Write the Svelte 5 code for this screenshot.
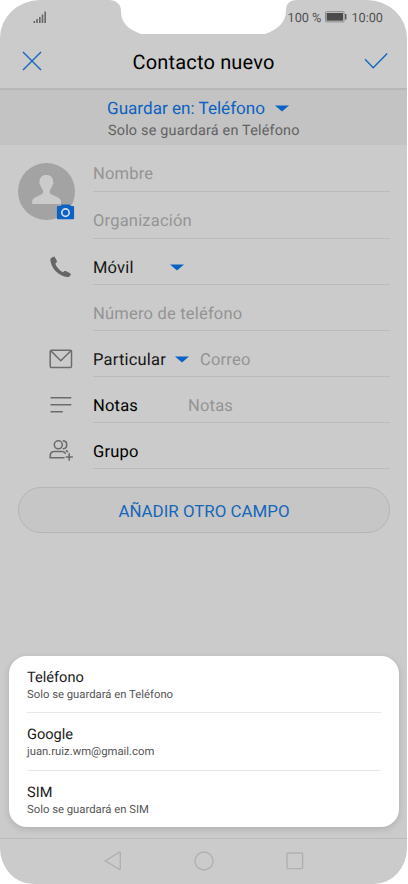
<script>
  let account = 'Teléfono';

  const accounts = [
    { name: 'Teléfono', detail: 'Solo se guardará en Teléfono' },
    { name: 'Google', detail: 'juan.ruiz.wm@gmail.com' },
    { name: 'SIM', detail: 'Solo se guardará en SIM' },
  ];

  const fields = [
    { icon: 'phone', label: 'Móvil', menu: true, size: 'mobile' },
    { hint: 'Número de teléfono' },
    { icon: 'mail', label: 'Particular', menu: true, hint: 'Correo', size: 'mail' },
    { icon: 'notes', label: 'Notas', hint: 'Notas', size: 'notes' },
    { icon: 'group', label: 'Grupo', size: 'group' },
  ];
</script>

<div class="phone">
  <svg class="notch" width="188" height="35" viewBox="0 0 188 35">
    <path d="M0 0C7 0 12 4 12 11C12 22 18 29 32 34H156C170 29 177 21 177 11C177 4 180 0 188 0Z" fill="#fff" />
  </svg>

  <div class="status">
    <svg class="signal" width="14" height="13" viewBox="0 0 14 13" fill="#666">
      <rect x="0.5" y="10" width="1.6" height="2" />
      <rect x="3.2" y="8" width="1.6" height="4" />
      <rect x="6" y="6" width="1.6" height="6" />
      <rect x="8.7" y="3.5" width="1.6" height="8.5" />
      <rect x="11.4" y="0.5" width="1.6" height="11.5" />
    </svg>
    <div class="status-right">
      <span class="percent">100 %</span>
      <svg width="22" height="12" viewBox="0 0 22 12">
        <rect x="0.5" y="0.7" width="18.6" height="10.2" rx="1" fill="none" stroke="#8a8a8a" />
        <rect x="1.6" y="2" width="16.4" height="7.7" fill="#4b4b4b" />
        <rect x="20" y="3" width="1.4" height="5.5" fill="#555" />
      </svg>
      <span class="clock">10:00</span>
    </div>
  </div>

  <header>
    <svg width="20" height="20" viewBox="0 0 20 20" fill="none" stroke="#1467bd" stroke-width="1.4">
      <path d="M1 1L19 19M19 1L1 19" />
    </svg>
    <h1>Contacto nuevo</h1>
    <svg width="24" height="18" viewBox="0 0 24 18" fill="none" stroke="#1467bd" stroke-width="1.4">
      <path d="M1 7.3L9.2 15.7L23.2 1.4" />
    </svg>
  </header>

  <div class="save-in">
    <div class="save-title">
      <span>Guardar en: {account}</span>
      <svg width="14" height="7" viewBox="0 0 14 7"><path d="M0 0.5H14L7 6.6Z" fill="#0a62c4" /></svg>
    </div>
    <div class="save-detail">Solo se guardará en {account}</div>
  </div>

  <div class="form">
    <div class="identity">
      <svg class="avatar" width="58" height="58" viewBox="0 0 58 58">
        <circle cx="28.5" cy="28.5" r="28.5" fill="#a3a3a3" />
        <path d="M28.3 12C24 12 21.5 14.5 21.7 18.5C21 18.6 21 21 22.2 21.8C22.8 24.5 24 26 25 27V29.8C24 33 14.2 33.5 14.2 38.5V41H43V38.5C43 33.5 32.8 33 31.8 29.8V27C33 26 34 24.5 34.5 21.8C35.7 21 35.7 18.6 35 18.5C35.2 14.5 32.7 12 28.3 12Z" fill="#cbcbcb" />
        <path d="M40 43H42.6L43.8 41.6H51.6L52.8 43H55Q56.1 43 56.1 44V55.2Q56.1 56.3 55 56.3H40Q38.9 56.3 38.9 55.2V44Q38.9 43 40 43Z" fill="#0b62c3" />
        <circle cx="47.5" cy="49.6" r="3.7" fill="none" stroke="#cfdced" stroke-width="1.7" />
      </svg>
      <div class="names">
        <div class="row tall"><span class="hint">Nombre</span></div>
        <div class="row tall"><span class="hint">Organización</span></div>
      </div>
    </div>

    {#each fields as field}
      <div class="field">
        <div class="icon">
          {#if field.icon === 'phone'}
            <svg width="24" height="24" viewBox="0 0 24 24">
              <path d="M2.2 2.9L4.5 1.7Q5.4 1.4 5.9 2.2L7.9 5.9Q8.2 6.7 7.6 7.3L6.3 8.7C7.4 12 10.6 15.4 14 17.2L15.5 16.1Q16.2 15.7 16.9 16.1L21.4 18.4Q22.2 18.9 21.7 19.8L20.5 21.4Q19.8 22.2 18.6 22.1C9.8 21.4 2.1 13.7 1.3 4.8Q1.2 3.5 2.2 2.9Z" fill="#666" />
            </svg>
          {:else if field.icon === 'mail'}
            <svg width="24" height="20" viewBox="0 0 24 20" fill="none" stroke="#6c6c6c" stroke-width="1.5" stroke-linejoin="round">
              <rect x="1.2" y="1.2" width="21.3" height="17.3" rx="1.2" />
              <path d="M2 2L11.8 11.8L21.7 2" />
            </svg>
          {:else if field.icon === 'notes'}
            <svg width="24" height="18" viewBox="0 0 24 18" stroke="#6c6c6c" stroke-width="1.4" stroke-linecap="round">
              <path d="M2 1.8H21.8M2 8.8H21.8M2 15.8H13.3" />
            </svg>
          {:else if field.icon === 'group'}
            <svg width="26" height="24" viewBox="0 0 26 24" fill="none" stroke="#6c6c6c" stroke-width="1.6" stroke-linecap="round">
              <circle cx="10.3" cy="5.8" r="4" />
              <path d="M15.4 1.9C19.8 2.2 19.8 9.4 15.4 9.8M16 18.8H2.2V17Q2.2 12.5 6.5 12.5H14Q16 12.5 17.3 14.2M18.4 11.9Q19.2 12.1 19.6 12.7M21.2 14.9V21.1M18.2 18H24.3" />
            </svg>
          {/if}
        </div>
        <div class="row">
          {#if field.label}
            <span class="label {field.size}">{field.label}</span>
          {/if}
          {#if field.menu}
            <svg class="arrow" width="14" height="7" viewBox="0 0 14 7"><path d="M0 0.5H14L7 6.6Z" fill="#0a62c4" /></svg>
          {/if}
          {#if field.hint}
            <span class="hint">{field.hint}</span>
          {/if}
        </div>
      </div>
    {/each}
  </div>

  <button class="add">AÑADIR OTRO CAMPO</button>

  <nav>
    <svg width="18" height="20" viewBox="0 0 18 20"><path d="M1.2 9.8L15.5 1.2Q16.3 1 16.3 1.8V18Q16.3 18.8 15.5 18.4Z" /></svg>
    <svg width="20" height="20" viewBox="0 0 20 20"><circle cx="10" cy="10" r="9" /></svg>
    <svg width="18" height="18" viewBox="0 0 18 18"><rect x="1" y="1" width="15.6" height="15.6" rx="0.8" /></svg>
  </nav>

  <div class="sheet">
    {#each accounts as item}
      <div class="option">
        <div class="option-name">{item.name}</div>
        <div class="option-detail">{item.detail}</div>
      </div>
    {/each}
  </div>
</div>

<style>
  :global(body) {
    background: #fff;
  }

  .phone {
    position: relative;
    display: flex;
    flex-direction: column;
    box-sizing: border-box;
    width: 407px;
    height: 884px;
    overflow: hidden;
    background: #cbcbcb;
    border-radius: 40px 40px 33px 33px / 38px 38px 36px 36px;
    font-family: Roboto, sans-serif;
    text-rendering: geometricPrecision;
    color: #000;
  }

  svg {
    display: block;
    flex: none;
  }

  .notch {
    position: absolute;
    top: 0;
    left: 109px;
  }

  .status {
    display: flex;
    justify-content: space-between;
    align-items: center;
    height: 34px;
    padding: 0 24px 0 33px;
    box-sizing: border-box;
    color: #505050;
    font-size: 12.7px;
  }

  .status span {
    padding-top: 2px;
  }

  .status-right {
    display: flex;
    align-items: center;
    gap: 4px;
  }

  header {
    display: flex;
    justify-content: space-between;
    align-items: center;
    height: 56px;
    padding: 0 19px 0 22px;
    box-sizing: border-box;
    border-bottom: 2px solid #b8b8b8;
  }

  h1 {
    margin: 0;
    padding: 1px 0 0 1px;
    font-size: 20px;
    font-weight: 400;
    line-height: 24px;
    letter-spacing: 0.18px;
  }

  .save-in {
    height: 55px;
    padding: 8px 0 0 107px;
    box-sizing: border-box;
    background: #c3c3c3;
  }

  .save-title {
    display: flex;
    align-items: center;
    gap: 10px;
    height: 21px;
    color: #0b62c0;
    font-size: 17.1px;
    line-height: 21px;
  }

  .save-title span {
    padding-top: 2px;
  }

  .save-title svg {
    margin-bottom: 1px;
  }

  .save-detail {
    margin-left: 1px;
    padding-top: 1px;
    color: #626262;
    font-size: 14.4px;
    line-height: 22px;
    letter-spacing: 0.2px;
  }

  .identity {
    display: flex;
    padding-left: 18px;
  }

  .avatar {
    margin: 18px 17px 0 0;
  }

  .names {
    flex: 1;
  }

  .field {
    display: flex;
  }

  .icon {
    display: flex;
    align-items: center;
    justify-content: center;
    width: 64px;
    height: 46px;
    margin-left: 29px;
    padding-top: 9px;
    box-sizing: border-box;
  }

  .row {
    display: flex;
    flex: 1;
    align-items: center;
    height: 46px;
    margin-right: 17px;
    padding-top: 11px;
    box-sizing: border-box;
    border-bottom: 1px solid #bbb;
    font-size: 16.5px;
    letter-spacing: 0.2px;
  }

  .row span {
    padding-top: 2px;
  }

  .row.tall {
    height: 47px;
  }

  .hint {
    color: #949494;
  }

  .mobile {
    width: 77px;
  }

  .label.mobile,
  .label.mail {
    color: #161616;
  }

  .mail {
    width: 82px;
  }

  .notes {
    width: 95px;
  }

  .arrow {
    margin-right: 11px;
  }

  .add {
    height: 46px;
    margin: 18px 17px 0 18px;
    padding: 1px 0 0;
    border: 1px solid #b5b5b5;
    border-radius: 23px;
    background: #c6c6c6;
    color: #1567ba;
    font-family: inherit;
    font-size: 16.9px;
  }

  nav {
    display: flex;
    align-items: center;
    gap: 72px;
    height: 46px;
    margin-top: auto;
    padding: 0 0 1px 104px;
    box-sizing: border-box;
    border-top: 1px solid #bababa;
  }

  nav svg {
    fill: none;
    stroke: #b1b1b1;
    stroke-width: 1.4;
  }

  .sheet {
    position: absolute;
    left: 9px;
    right: 8px;
    bottom: 57px;
    height: 171px;
    padding: 0 18px;
    box-sizing: border-box;
    border-radius: 18px;
    background: #fff;
    box-shadow: 0 2px 7px rgba(0, 0, 0, 0.14);
  }

  .option {
    height: 57.4px;
    padding-top: 12px;
    box-sizing: border-box;
    border-bottom: 1px solid #e8e8e8;
  }

  .option:last-child {
    border-bottom: none;
  }

  .option-name {
    color: #202020;
    font-size: 14.6px;
    line-height: 19px;
  }

  .option-detail {
    color: #555;
    font-size: 11.3px;
    line-height: 15px;
  }
</style>
